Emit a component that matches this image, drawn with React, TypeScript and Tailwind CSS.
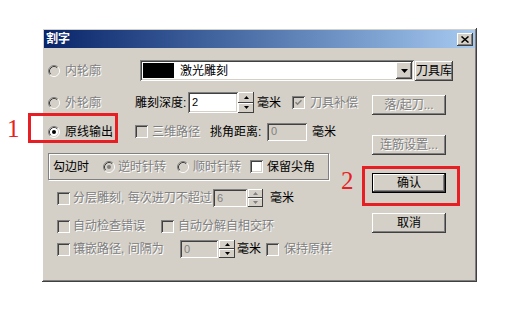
import type { ReactNode } from 'react';

const RAISED =
  'shadow-[inset_-1px_-1px_0_#404040,inset_1px_1px_0_#fff,inset_-2px_-2px_0_#808080,inset_2px_2px_0_#d4d0c8]';
const SUNKEN =
  'shadow-[inset_1px_1px_0_#808080,inset_-1px_-1px_0_#fff,inset_2px_2px_0_#404040,inset_-2px_-2px_0_#d4d0c8]';
const GRAY = 'text-[#808080] [text-shadow:1px_1px_0_#fff]';

function Radio({ checked = false, disabled = false }: { checked?: boolean; disabled?: boolean }) {
  return (
    <svg width="12" height="12" viewBox="0 0 12 12" className="shrink-0">
      <circle cx="6" cy="6" r="5" fill={disabled ? '#d4d0c8' : '#fff'} />
      <path d="M2.11 9.89A5.5 5.5 0 0 1 9.89 2.11" fill="none" stroke="#808080" />
      <path d="M9.89 2.11A5.5 5.5 0 0 1 2.11 9.89" fill="none" stroke="#fff" />
      <path d="M2.82 9.18A4.5 4.5 0 0 1 9.18 2.82" fill="none" stroke="#404040" />
      <path d="M9.18 2.82A4.5 4.5 0 0 1 2.82 9.18" fill="none" stroke="#d4d0c8" />
      {checked && <circle cx="6" cy="6" r="2" fill={disabled ? '#808080' : '#000'} />}
    </svg>
  );
}

function Check({ checked = false, disabled = false }: { checked?: boolean; disabled?: boolean }) {
  return (
    <span
      className={`relative inline-block h-[13px] w-[13px] shrink-0 ${SUNKEN} ${
        disabled ? 'bg-[#d4d0c8]' : 'bg-white'
      }`}
    >
      {checked && (
        <svg className="absolute left-[3px] top-[3px]" width="7" height="7" viewBox="0 0 7 7">
          <path
            d="M0.5 3.2l2 2 4-4"
            fill="none"
            stroke={disabled ? '#808080' : '#000'}
            strokeWidth="1.6"
          />
        </svg>
      )}
    </span>
  );
}

function Text({ children, disabled = false, className = '' }: { children: ReactNode; disabled?: boolean; className?: string }) {
  return (
    <span className={`whitespace-nowrap text-[12px] leading-[14px] ${disabled ? GRAY : 'text-black'} ${className}`}>
      {children}
    </span>
  );
}

function Field({ value, disabled = false, className = '' }: { value: string; disabled?: boolean; className?: string }) {
  return (
    <div
      className={`flex items-center pl-[4px] text-[11px] ${SUNKEN} ${
        disabled ? 'bg-[#d4d0c8] text-[#808080]' : 'bg-white text-black'
      } ${className}`}
    >
      {value}
    </div>
  );
}

function Spin({ disabled = false, className = '' }: { disabled?: boolean; className?: string }) {
  const c = disabled ? '#808080' : '#000';
  return (
    <div className={`flex flex-col ${className}`}>
      <div className="flex flex-1 items-center justify-center bg-[#d4d0c8] shadow-[inset_-1px_-1px_0_#404040,inset_1px_1px_0_#fff]">
        <svg width="5" height="3" viewBox="0 0 5 3">
          <path d="M2.5 0L5 3H0z" fill={c} />
        </svg>
      </div>
      <div className="flex flex-1 items-center justify-center bg-[#d4d0c8] shadow-[inset_-1px_-1px_0_#404040,inset_1px_1px_0_#fff]">
        <svg width="5" height="3" viewBox="0 0 5 3">
          <path d="M0 0H5L2.5 3z" fill={c} />
        </svg>
      </div>
    </div>
  );
}

function Btn({
  children,
  disabled = false,
  def = false,
  className = '',
}: {
  children: ReactNode;
  disabled?: boolean;
  def?: boolean;
  className?: string;
}) {
  return (
    <div
      className={`flex h-[20px] items-center justify-center bg-[#d4d0c8] ${
        def ? 'border border-black' : ''
      } ${RAISED} ${className}`}
    >
      <Text disabled={disabled}>{children}</Text>
    </div>
  );
}

export default function App() {
  return (
    <div className="relative h-[327px] w-[524px] overflow-hidden bg-white pl-[42px] pt-[28px] font-['Liberation_Sans','Noto_Sans_CJK_SC',sans-serif]">
      <div className={`flex h-[254px] w-[435px] flex-col bg-[#d4d0c8] p-[2px] ${RAISED}`}>
        {/* title bar */}
        <div className="flex h-[18px] items-center justify-between bg-linear-to-r from-[#0a246a] to-[#a6caf0] pl-[2px] pr-[2px]">
          <span className="text-[12px] font-bold leading-none text-white">割字</span>
          <div className={`flex h-[13px] w-[16px] items-center justify-center bg-[#d4d0c8] ${RAISED}`}>
            <svg width="8" height="7" viewBox="0 0 8 7">
              <path d="M0.5 0.5l7 6M7.5 0.5l-7 6" stroke="#000" strokeWidth="1.5" />
            </svg>
          </div>
        </div>

        <div className="pl-[4px] pt-[12px]">
          {/* row 1 */}
          <div className="flex h-[21px] items-center">
            <div className="flex w-[92px] items-center gap-[5px]">
              <Radio disabled />
              <Text disabled>内轮廓</Text>
            </div>
            <div className={`flex h-[21px] w-[274px] items-center bg-white p-[2px] ${SUNKEN}`}>
              <div className="ml-[1px] h-[15px] w-[31px] bg-black" />
              <Text className="ml-[6px] flex-1">激光雕刻</Text>
              <div className={`flex h-[17px] w-[16px] items-center justify-center bg-[#d4d0c8] ${RAISED}`}>
                <svg width="7" height="4" viewBox="0 0 7 4">
                  <path d="M0 0H7L3.5 4z" fill="#000" />
                </svg>
              </div>
            </div>
            <Btn className="ml-[1px] w-[38px]">刀具库</Btn>
          </div>

          <div className="mt-[11px] flex">
            {/* left column */}
            <div className="w-[324px]">
              {/* row 2 */}
              <div className="flex h-[21px] items-center">
                <div className="flex w-[87px] items-center gap-[5px]">
                  <Radio disabled />
                  <Text disabled>外轮廓</Text>
                </div>
                <Text className="w-[53px]">雕刻深度:</Text>
                <Field value="2" className="h-[21px] w-[50px]" />
                <Spin className="h-[21px] w-[16px]" />
                <Text className="ml-[3px]">毫米</Text>
                <span className="ml-[11px] flex">
                  <Check checked disabled />
                </span>
                <Text disabled className="ml-[5px]">
                  刀具补偿
                </Text>
              </div>

              {/* row 3 */}
              <div className="mt-[9px] flex h-[19px] items-center">
                <div className="flex w-[87px] items-center gap-[5px]">
                  <Radio checked />
                  <Text>原线输出</Text>
                </div>
                <Check disabled />
                <Text disabled className="ml-[4px]">
                  三维路径
                </Text>
                <Text className="ml-[10px] w-[52px]">挑角距离:</Text>
                <Field value="0" disabled className="ml-[5px] h-[18px] w-[40px]" />
                <Text className="ml-[5px]">毫米</Text>
              </div>

              {/* group */}
              <div className="mt-[12px] flex h-[27px] w-[281px] items-center border border-[#808080] pl-[4px] shadow-[1px_1px_0_#fff,inset_1px_1px_0_#fff]">
                <Text>勾边时</Text>
                <span className="ml-[14px] flex">
                  <Radio checked disabled />
                </span>
                <Text disabled className="ml-[3px]">
                  逆时针转
                </Text>
                <span className="ml-[11px] flex">
                  <Radio disabled />
                </span>
                <Text disabled className="ml-[4px]">
                  顺时针转
                </Text>
                <span className="ml-[9px] flex">
                  <Check />
                </span>
                <Text className="ml-[4px]">保留尖角</Text>
              </div>

              {/* row 分层 */}
              <div className="mt-[9px] flex h-[18px] items-center pl-[9px]">
                <Check disabled />
                <Text disabled className="ml-[3px] w-[140px]">
                  分层雕刻, 每次进刀不超过
                </Text>
                <Field value="6" disabled className="h-[18px] w-[34px]" />
                <Spin disabled className="ml-[1px] h-[18px] w-[15px]" />
                <Text className="ml-[7px]">毫米</Text>
              </div>

              {/* row 自动 */}
              <div className="mt-[12px] flex h-[14px] items-center pl-[9px]">
                <Check disabled />
                <Text disabled className="ml-[3px] w-[72px]">
                  自动检查错误
                </Text>
                <span className="ml-[16px] flex">
                  <Check disabled />
                </span>
                <Text disabled className="ml-[4px]">
                  自动分解自相交环
                </Text>
              </div>

              {/* row 镶嵌 */}
              <div className="mt-[7px] flex h-[18px] items-center pl-[9px]">
                <Check disabled />
                <Text disabled className="ml-[3px] w-[92px]">
                  镶嵌路径, 间隔为
                </Text>
                <Field value="0" disabled className="ml-[15px] h-[18px] w-[38px]" />
                <Spin className="ml-[1px] h-[18px] w-[16px]" />
                <Text className="ml-[2px]">毫米</Text>
                <span className="ml-[5px] flex">
                  <Check disabled />
                </span>
                <Text disabled className="ml-[5px]">
                  保持原样
                </Text>
              </div>
            </div>

            {/* right column */}
            <div className="flex w-[74px] flex-col">
              <Btn disabled className="mt-[3px]">
                落/起刀...
              </Btn>
              <Btn disabled className="mt-[20px]">
                连筋设置...
              </Btn>
              <Btn def className="mt-[18px]">
                确认
              </Btn>
              <Btn className="mt-[20px]">取消</Btn>
            </div>
          </div>
        </div>
      </div>

      {/* annotations */}
      <div className="absolute left-[28px] top-[113px] h-[30px] w-[90px] border-[3px] border-[#e81e25]" />
      <span className="absolute left-[7px] top-[116px] font-['Liberation_Serif',serif] text-[25px] leading-none text-[#e81e25]">
        1
      </span>
      <div className="absolute left-[362px] top-[166px] h-[40px] w-[98px] border-[3px] border-[#e81e25]" />
      <span className="absolute left-[341px] top-[168px] font-['Liberation_Serif',serif] text-[25px] leading-none text-[#e81e25]">
        2
      </span>
    </div>
  );
}
